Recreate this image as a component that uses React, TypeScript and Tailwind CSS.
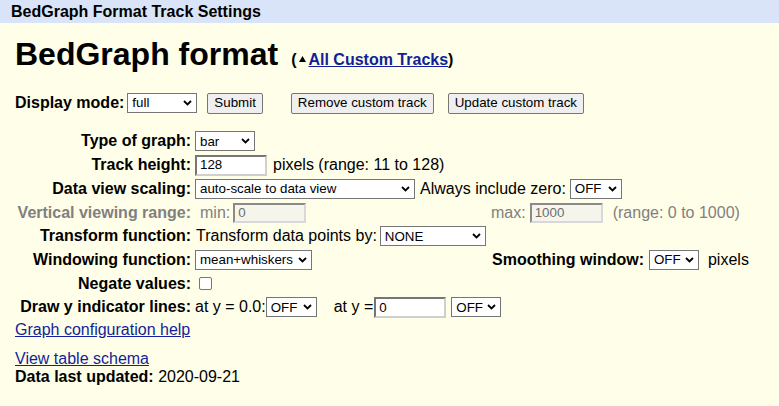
import clsx from "clsx";

const Chevron = () => (
  <svg width="9" height="6" viewBox="0 0 9 6" className="shrink-0">
    <polyline points="1,1 4.5,4.5 8,1" fill="none" stroke="#000" strokeWidth="1.8" />
  </svg>
);

const Select = ({ value, className = "" }: { value: string; className?: string }) => (
  <span
    className={clsx(
      "inline-flex h-[20px] shrink-0 items-center justify-between border border-[#767676] bg-white pl-[4px] pr-[4px] text-[13.33px] leading-none text-black",
      className
    )}
  >
    <span>{value}</span>
    <Chevron />
  </span>
);

const TextBox = ({ value, className = "", disabled = false }: { value: string; className?: string; disabled?: boolean }) => (
  <span
    className={clsx(
      "inline-flex shrink-0 items-center border-2 pl-[3px] text-[13.33px] leading-none",
      disabled
        ? "h-[20px] border-t-[#8a8a8a] border-l-[#8a8a8a] border-r-[#d8d8d8] border-b-[#d8d8d8] bg-[#f6f5ec] text-[#6d6d6d]"
        : "h-[21px] border-t-[#767676] border-l-[#767676] border-r-[#cfcfcf] border-b-[#cfcfcf] bg-white text-black",
      className
    )}
  >
    {value}
  </span>
);

const Btn = ({ children, className = "" }: { children: string; className?: string }) => (
  <button
    className={clsx(
      "inline-flex h-[21px] items-center rounded-[2px] border border-[#767676] bg-[#efefef] px-[6px] text-[13.33px] leading-none text-black",
      className
    )}
  >
    {children}
  </button>
);

const Row = ({ label, grey = false, children }: { label: string; grey?: boolean; children?: React.ReactNode }) => (
  <div className="flex h-[23.7px] items-center">
    <div className={clsx("w-[176px] shrink-0 text-right font-bold", grey && "text-[#808080]")}>{label}</div>
    <div className="ml-[4px] flex items-center">{children}</div>
  </div>
);

export default function App() {
  return (
    <div className="min-h-screen w-full bg-[#FFFEE8] font-['Liberation_Sans',Arial,sans-serif] text-[16px] leading-[18px] text-black">
      {/* title bar */}
      <div className="flex h-[23px] items-center bg-[#D9E4F8] pl-[11px] font-bold">BedGraph Format Track Settings</div>

      <div className="pl-[15px]">
        <div className="mt-[13px] flex items-baseline">
          <h1 className="text-[32px] leading-[37px] font-bold">BedGraph format</h1>
          <span className="ml-[13px] font-bold">
            (
            <svg width="7" height="6" viewBox="0 0 7 6" className="mb-[3px] ml-[3px] mr-[2px] inline">
              <polygon points="3.5,0 7,6 0,6" fill="#000" />
            </svg>
            <a href="#" className="text-[#121E9A] underline">All Custom Tracks</a>)
          </span>
        </div>

        <div className="mt-[18px] flex h-[24px] items-center">
          <span className="font-bold">Display mode:</span>
          <Select value="full" className="ml-[3px] w-[70px]" />
          <Btn className="ml-[10px]">Submit</Btn>
          <Btn className="ml-[28px]">Remove custom track</Btn>
          <Btn className="ml-[14px]">Update custom track</Btn>
        </div>

        <div className="mt-[14.6px]">
          <Row label="Type of graph:">
            <Select value="bar" className="w-[60px]" />
          </Row>
          <Row label="Track height:">
            <TextBox value="128" className="w-[72px]" />
            <span className="ml-[6px]">pixels (range: 11 to 128)</span>
          </Row>
          <Row label="Data view scaling:">
            <Select value="auto-scale to data view" className="w-[220px]" />
            <span className="ml-[5px]">Always include zero:</span>
            <Select value="OFF" className="ml-[4px] w-[52px]" />
          </Row>
          <Row label="Vertical viewing range:" grey>
            <div className="flex w-[296px] items-center text-[#808080]">
              <span className="ml-[5px]">min:</span>
              <TextBox value="0" disabled className="ml-[3px] w-[73px]" />
            </div>
            <span className="text-[#808080]">max:</span>
            <TextBox value="1000" disabled className="ml-[4px] w-[73px]" />
            <span className="ml-[10px] text-[#808080]">(range: 0 to 1000)</span>
          </Row>
          <Row label="Transform function:">
            <span className="ml-[1px]">Transform data points by:</span>
            <Select value="NONE" className="ml-[3px] w-[106px]" />
          </Row>
          <Row label="Windowing function:">
            <div className="flex w-[297px] items-center">
              <Select value="mean+whiskers" className="w-[117px]" />
            </div>
            <span className="font-bold">Smoothing window:</span>
            <Select value="OFF" className="ml-[5px] w-[50px]" />
            <span className="ml-[9px]">pixels</span>
          </Row>
          <Row label="Negate values:">
            <span className="ml-[4px] h-[13px] w-[13px] rounded-[2px] border border-[#767676] bg-white" />
          </Row>
          <Row label="Draw y indicator lines:">
            <span>at y = 0.0:</span>
            <Select value="OFF" className="w-[51px]" />
            <span className="ml-[17px]">at y =</span>
            <TextBox value="0" className="ml-[1px] w-[72px]" />
            <Select value="OFF" className="ml-[5px] w-[50px]" />
          </Row>
        </div>

        <div className="mt-[2px]">
          <a href="#" className="text-[#121E9A] underline">Graph configuration help</a>
        </div>
        <div className="mt-[10.5px]">
          <a href="#" className="text-[#121E9A] underline">View table schema</a>
        </div>
        <div>
          <span className="font-bold">Data last updated:</span> 2020-09-21
        </div>
      </div>
    </div>
  );
}
